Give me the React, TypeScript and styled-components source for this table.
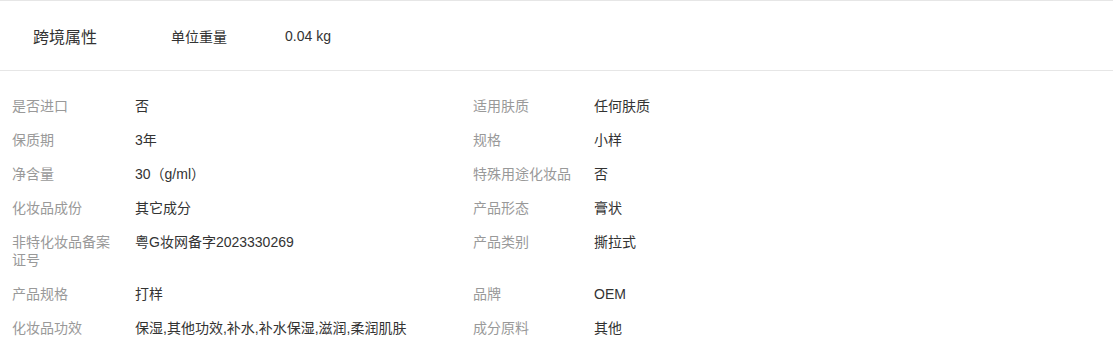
import React from 'react'
import styled, { createGlobalStyle } from 'styled-components'

const GlobalStyle = createGlobalStyle`
  body {
    margin: 0;
    background: #fff;
    font-family: "Liberation Sans", "Noto Sans CJK SC", sans-serif;
  }
`

const Wrapper = styled.div`
  width: 1113px;
  background: #fff;
`

const Header = styled.div`
  display: flex;
  align-items: center;
  height: 69px;
  border-top: 1px solid #e6e6e6;
  border-bottom: 1px solid #e6e6e6;
  color: #333;
`

const Title = styled.div`
  width: 138px;
  padding-left: 33px;
  font-size: 16px;
`

const HeadKey = styled.div`
  width: 114px;
  font-size: 14px;
`

const HeadValue = styled.div`
  font-size: 14px;
`

const Grid = styled.div`
  display: grid;
  grid-template-columns: 123px 338px 121px 1fr;
  padding: 18px 0 0 12px;
  font-size: 14px;
  line-height: 18px;
`

const Label = styled.div`
  padding: 8px 16px 8px 0;
  color: #999;
`

const Value = styled.div`
  padding: 8px 0;
  color: #333;
`

// each row is [left label, left value, right label, right value]
const rows: [string, string, string, string][] = [
  ['是否进口', '否', '适用肤质', '任何肤质'],
  ['保质期', '3年', '规格', '小样'],
  ['净含量', '30（g/ml）', '特殊用途化妆品', '否'],
  ['化妆品成份', '其它成分', '产品形态', '膏状'],
  ['非特化妆品备案证号', '粤G妆网备字2023330269', '产品类别', '撕拉式'],
  ['产品规格', '打样', '品牌', 'OEM'],
  ['化妆品功效', '保湿,其他功效,补水,补水保湿,滋润,柔润肌肤', '成分原料', '其他'],
]

const App = () => {
  return (
    <Wrapper>
      <GlobalStyle />
      <Header>
        <Title>跨境属性</Title>
        <HeadKey>单位重量</HeadKey>
        <HeadValue>0.04 kg</HeadValue>
      </Header>
      <Grid>
        {rows.map((r) => (
          <React.Fragment key={r[0]}>
            <Label>{r[0]}</Label>
            <Value>{r[1]}</Value>
            <Label>{r[2]}</Label>
            <Value>{r[3]}</Value>
          </React.Fragment>
        ))}
      </Grid>
    </Wrapper>
  )
}

export default App
